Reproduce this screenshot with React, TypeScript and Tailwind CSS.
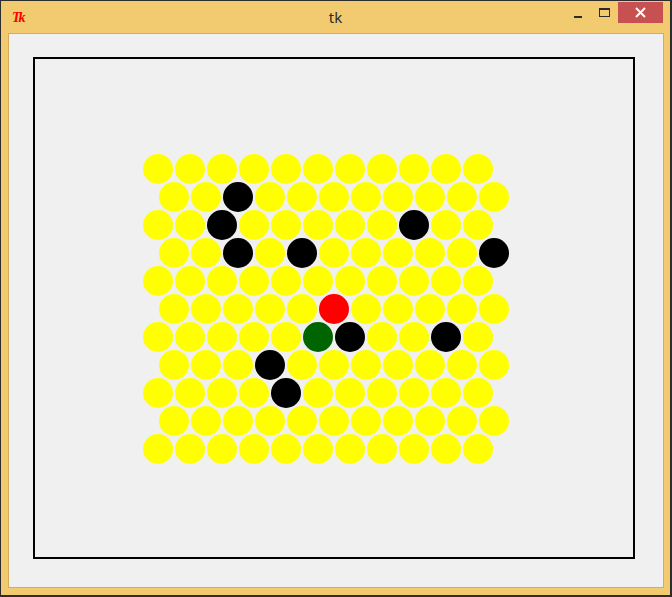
import React from 'react';

// board cell states: 0 = empty (yellow), 1 = blocked (black), 2 = cat (red), 3 = target (green)
const ROWS = 11;
const COLS = 11;

const blocked: Record<string, number> = {
  '1-2': 1,
  '2-2': 1,
  '2-8': 1,
  '3-2': 1,
  '3-4': 1,
  '3-10': 1,
  '5-5': 2,
  '6-5': 3,
  '6-6': 1,
  '6-9': 1,
  '7-3': 1,
  '8-4': 1,
};

const fill = (v: number) => {
  if (v === 1) return 'bg-black';
  if (v === 2) return 'bg-[#ff0000]';
  if (v === 3) return 'bg-[#006400]';
  return 'bg-[#ffff00]';
};

function TitleBar() {
  return (
    <div className="grid h-[32px] grid-cols-[1fr_auto_1fr]">
      <div className="flex items-start pl-[11px] pt-[9px]">
        <span className="text-[14px] font-bold italic leading-[16px] tracking-[-2px] text-[#ff0000] [font-family:'Liberation_Serif',serif]">
          Tk
        </span>
      </div>
      <div className="pt-[6px] text-[15px] leading-[20px] text-[#2b2b2b] [font-family:'Noto_Sans',sans-serif]">
        tk
      </div>
      <div className="flex items-start justify-end pr-[7px] pt-[1px]">
        <div className="flex h-[22px] w-[27px] items-center justify-center">
          <div className="mt-[8px] h-[2px] w-[8px] bg-[#2b2b2b]" />
        </div>
        <div className="flex h-[22px] w-[27px] items-center justify-center">
          <div className="mb-[2px] h-[9px] w-[11px] border border-t-2 border-[#2b2b2b]" />
        </div>
        <div className="flex h-[21px] w-[45px] items-center justify-center bg-[#c75050]">
          <svg width="11" height="11" viewBox="0 0 11 11">
            <path d="M1 1 L10 10 M10 1 L1 10" stroke="#fff" strokeWidth="2" />
          </svg>
        </div>
      </div>
    </div>
  );
}

function Board() {
  return (
    <div className="flex flex-col pl-[108px] pt-[95px]">
      {Array.from({ length: ROWS }).map((_, r) => (
        <div key={r} className={`flex h-[28px] gap-[2px] ${r % 2 === 1 ? 'pl-[16px]' : ''}`}>
          {Array.from({ length: COLS }).map((_, c) => (
            <div key={c} className={`h-[30px] w-[30px] shrink-0 rounded-full ${fill(blocked[`${r}-${c}`] || 0)}`} />
          ))}
        </div>
      ))}
    </div>
  );
}

export default function App() {
  return (
    <div className="h-[597px] w-[672px] overflow-hidden border-b-2 border-l border-r-2 border-t border-[#2d2d2d] bg-[#f2ca6f]">
      <TitleBar />
      <div className="ml-[7px] h-[555px] w-[656px] border border-[#d3ad5c] bg-[#f0f0f0] pl-[24px] pt-[23px]">
        <div className="h-[502px] w-[602px] overflow-hidden border-2 border-black">
          <Board />
        </div>
      </div>
    </div>
  );
}
